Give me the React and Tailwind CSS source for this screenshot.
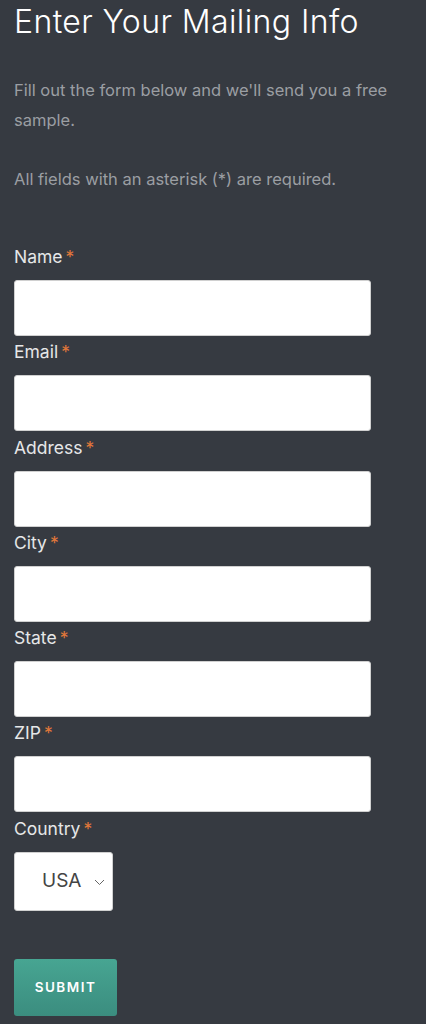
import React from "react";

const fields = ["Name", "Email", "Address", "City", "State", "ZIP"];

function Label({ children }) {
  return (
    <label className="block text-[17.5px] leading-[24px] text-[#e6e7e8]">
      {children}
      <span className="ml-[3px] text-[#e0773a]">*</span>
    </label>
  );
}

export default function App() {
  return (
    <div
      className="min-h-screen bg-[#363a41] px-[14px] pb-10"
      style={{ fontFamily: "Inter, 'Noto Sans', sans-serif" }}
    >
      <h1 className="pt-[2px] text-[32px] leading-[40px] font-light tracking-[0.4px] text-white">
        Enter Your Mailing Info
      </h1>

      <p className="mt-[33px] text-[16.5px] leading-[30px] text-[#9b9ea3] pr-4">
        Fill out the form below and we'll send you a free sample.
      </p>
      <p className="mt-[29px] text-[16.5px] leading-[30px] text-[#9b9ea3]">
        All fields with an asterisk (*) are required.
      </p>

      <form className="mt-[51px]" onSubmit={(e) => e.preventDefault()}>
        {fields.map((f) => (
          <div key={f} className="mb-[4.3px]">
            <Label>{f}</Label>
            <input
              type="text"
              className="mt-[11px] block w-[357px] h-[56px] rounded-[3px] bg-white border border-[#d0d0d0]"
            />
          </div>
        ))}

        <div>
          <Label>Country</Label>
          <div className="relative mt-[11px] w-[99px] h-[59px] rounded-[3px] bg-white border border-[#d0d0d0] flex items-center">
            <span className="pl-[27px] text-[19px] text-[#444]">USA</span>
            <svg
              className="absolute right-[7px] top-[26px]"
              width="11"
              height="7"
              viewBox="0 0 11 7"
              fill="none"
              stroke="#666"
              strokeWidth="1"
            >
              <path d="M1 1l4.5 4.5L10 1" />
            </svg>
          </div>
        </div>

        <button
          type="submit"
          className="mt-[48px] w-[103px] h-[57px] rounded-[3px] bg-gradient-to-b from-[#47a592] to-[#3b8d7f] text-white text-[13.5px] font-semibold tracking-[1.5px]"
        >
          SUBMIT
        </button>
      </form>
    </div>
  );
}
